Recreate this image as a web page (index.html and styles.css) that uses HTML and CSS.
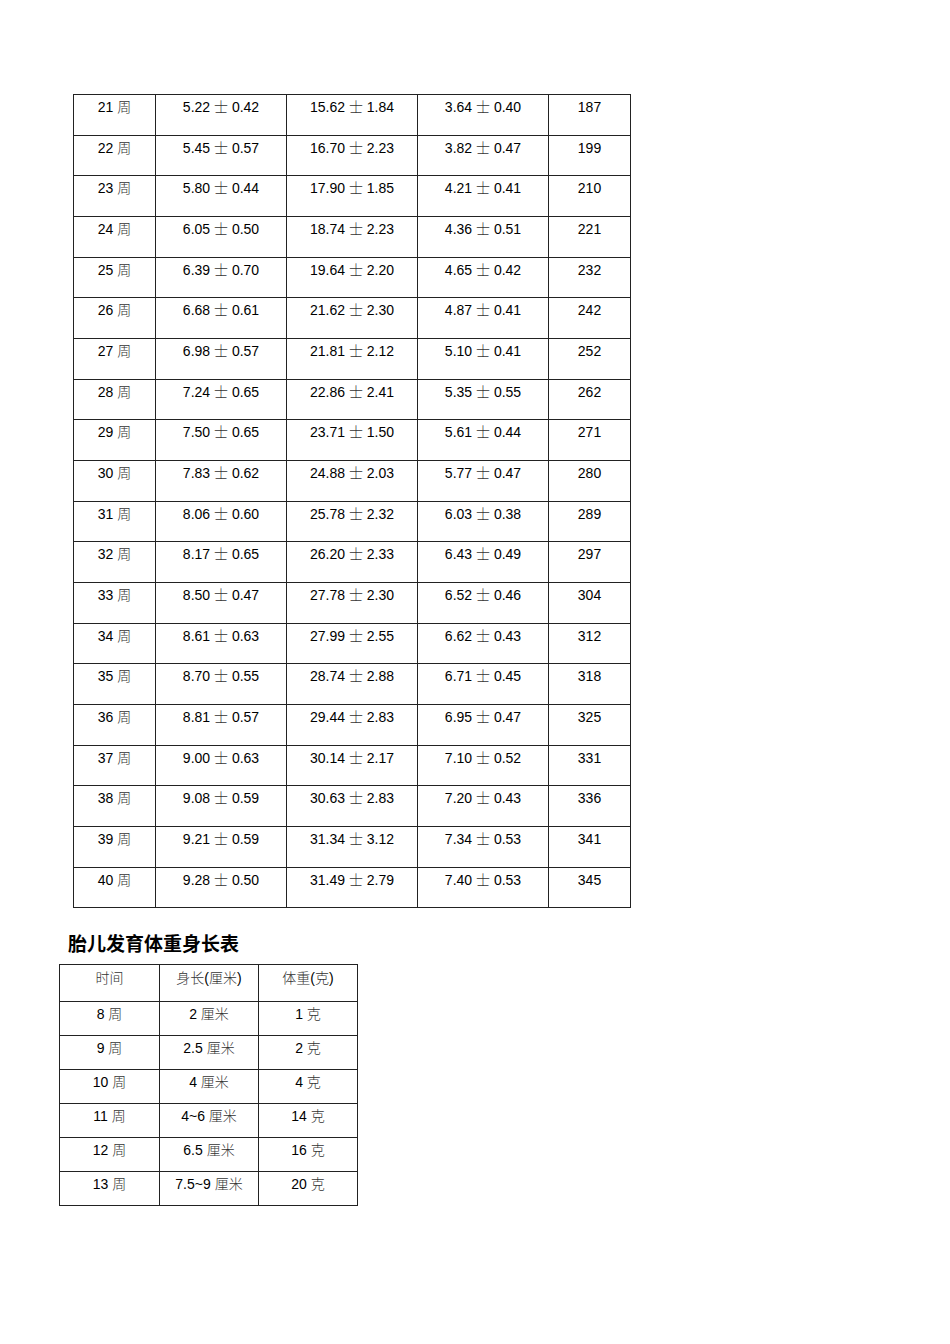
FILE: index.html
```html
<!DOCTYPE html>
<html>
<head>
<meta charset="utf-8">
<link rel="stylesheet" href="styles.css">
</head>
<body>
<div class="page">
<table class="t1">
<colgroup><col class="c1"><col class="c2"><col class="c2"><col class="c2"><col class="c1"></colgroup>
<tr><td>21 <i>周</i></td><td>5.22 <i>士</i> 0.42</td><td>15.62 <i>士</i> 1.84</td><td>3.64 <i>士</i> 0.40</td><td>187</td></tr>
<tr><td>22 <i>周</i></td><td>5.45 <i>士</i> 0.57</td><td>16.70 <i>士</i> 2.23</td><td>3.82 <i>士</i> 0.47</td><td>199</td></tr>
<tr><td>23 <i>周</i></td><td>5.80 <i>士</i> 0.44</td><td>17.90 <i>士</i> 1.85</td><td>4.21 <i>士</i> 0.41</td><td>210</td></tr>
<tr><td>24 <i>周</i></td><td>6.05 <i>士</i> 0.50</td><td>18.74 <i>士</i> 2.23</td><td>4.36 <i>士</i> 0.51</td><td>221</td></tr>
<tr><td>25 <i>周</i></td><td>6.39 <i>士</i> 0.70</td><td>19.64 <i>士</i> 2.20</td><td>4.65 <i>士</i> 0.42</td><td>232</td></tr>
<tr><td>26 <i>周</i></td><td>6.68 <i>士</i> 0.61</td><td>21.62 <i>士</i> 2.30</td><td>4.87 <i>士</i> 0.41</td><td>242</td></tr>
<tr><td>27 <i>周</i></td><td>6.98 <i>士</i> 0.57</td><td>21.81 <i>士</i> 2.12</td><td>5.10 <i>士</i> 0.41</td><td>252</td></tr>
<tr><td>28 <i>周</i></td><td>7.24 <i>士</i> 0.65</td><td>22.86 <i>士</i> 2.41</td><td>5.35 <i>士</i> 0.55</td><td>262</td></tr>
<tr><td>29 <i>周</i></td><td>7.50 <i>士</i> 0.65</td><td>23.71 <i>士</i> 1.50</td><td>5.61 <i>士</i> 0.44</td><td>271</td></tr>
<tr><td>30 <i>周</i></td><td>7.83 <i>士</i> 0.62</td><td>24.88 <i>士</i> 2.03</td><td>5.77 <i>士</i> 0.47</td><td>280</td></tr>
<tr><td>31 <i>周</i></td><td>8.06 <i>士</i> 0.60</td><td>25.78 <i>士</i> 2.32</td><td>6.03 <i>士</i> 0.38</td><td>289</td></tr>
<tr><td>32 <i>周</i></td><td>8.17 <i>士</i> 0.65</td><td>26.20 <i>士</i> 2.33</td><td>6.43 <i>士</i> 0.49</td><td>297</td></tr>
<tr><td>33 <i>周</i></td><td>8.50 <i>士</i> 0.47</td><td>27.78 <i>士</i> 2.30</td><td>6.52 <i>士</i> 0.46</td><td>304</td></tr>
<tr><td>34 <i>周</i></td><td>8.61 <i>士</i> 0.63</td><td>27.99 <i>士</i> 2.55</td><td>6.62 <i>士</i> 0.43</td><td>312</td></tr>
<tr><td>35 <i>周</i></td><td>8.70 <i>士</i> 0.55</td><td>28.74 <i>士</i> 2.88</td><td>6.71 <i>士</i> 0.45</td><td>318</td></tr>
<tr><td>36 <i>周</i></td><td>8.81 <i>士</i> 0.57</td><td>29.44 <i>士</i> 2.83</td><td>6.95 <i>士</i> 0.47</td><td>325</td></tr>
<tr><td>37 <i>周</i></td><td>9.00 <i>士</i> 0.63</td><td>30.14 <i>士</i> 2.17</td><td>7.10 <i>士</i> 0.52</td><td>331</td></tr>
<tr><td>38 <i>周</i></td><td>9.08 <i>士</i> 0.59</td><td>30.63 <i>士</i> 2.83</td><td>7.20 <i>士</i> 0.43</td><td>336</td></tr>
<tr><td>39 <i>周</i></td><td>9.21 <i>士</i> 0.59</td><td>31.34 <i>士</i> 3.12</td><td>7.34 <i>士</i> 0.53</td><td>341</td></tr>
<tr><td>40 <i>周</i></td><td>9.28 <i>士</i> 0.50</td><td>31.49 <i>士</i> 2.79</td><td>7.40 <i>士</i> 0.53</td><td>345</td></tr>
</table>
<h2 class="title">胎儿发育体重身长表</h2>
<table class="t2">
<colgroup><col class="d1"><col class="d2"><col class="d2"></colgroup>
<tr class="head"><td><i>时间</i></td><td><i>身长</i>(<i>厘米</i>)</td><td><i>体重</i>(<i>克</i>)</td></tr>
<tr><td>8 <i>周</i></td><td>2 <i>厘米</i></td><td>1 <i>克</i></td></tr>
<tr><td>9 <i>周</i></td><td>2.5 <i>厘米</i></td><td>2 <i>克</i></td></tr>
<tr><td>10 <i>周</i></td><td>4 <i>厘米</i></td><td>4 <i>克</i></td></tr>
<tr><td>11 <i>周</i></td><td>4~6 <i>厘米</i></td><td>14 <i>克</i></td></tr>
<tr><td>12 <i>周</i></td><td>6.5 <i>厘米</i></td><td>16 <i>克</i></td></tr>
<tr><td>13 <i>周</i></td><td>7.5~9 <i>厘米</i></td><td>20 <i>克</i></td></tr>
</table>
</div>
</body>
</html>
```
FILE: styles.css
```css
html, body { margin: 0; padding: 0; background: #fff; }
body {
  font-family: "Liberation Sans", Arial, "Noto Sans CJK SC", sans-serif;
  color: #000;
  font-size: 14px;
}
.page { padding: 94px 0 0 0; }
table {
  border-collapse: collapse;
  table-layout: fixed;
}
td {
  border: 1px solid #222;
  text-align: center;
  vertical-align: top;
  padding: 4px 0 0 0;
  line-height: 16px;
  box-sizing: border-box;
}
td i {
  font-style: normal;
  font-family: "Noto Sans CJK SC", sans-serif;
  font-weight: 300;
  color: #333;
  line-height: 10px;
}
.t1 { margin-left: 73px; width: 558px; }
.t1 col.c1 { width: 82px; }
.t1 col.c2 { width: 131px; }
.t1 td { height: 40.68px; }
.title {
  margin: 24px 0 0 68px;
  font-size: 19px;
  line-height: 26px;
  font-weight: bold;
  font-family: "Liberation Sans", "Noto Sans CJK SC", sans-serif;
}
.t2 { margin: 6px 0 0 59px; width: 299px; }
.t2 col.d1 { width: 100px; }
.t2 col.d2 { width: 99px; }
.t2 td { height: 34px; padding-top: 4px; }
.t2 tr.head td { height: 37px; padding-top: 5px; }
```
